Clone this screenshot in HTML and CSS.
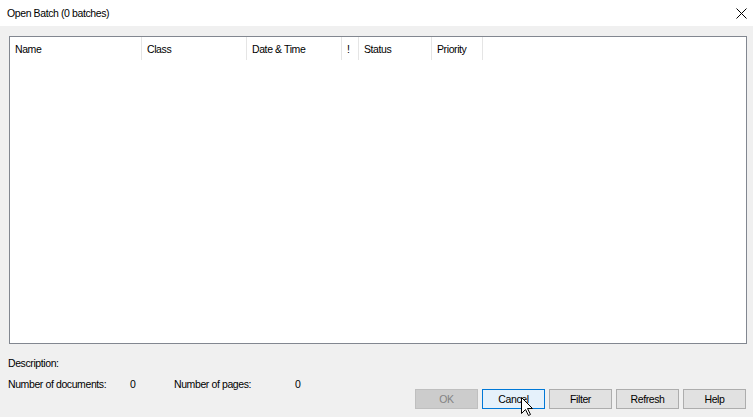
FILE: index.html
```html
<!DOCTYPE html>
<html lang="en">
<head>
    <meta charset="UTF-8">
    <title>Open Batch</title>
    <link rel="stylesheet" href="styles.css">
</head>
<body>
    <div class="dialog">
        <div class="titlebar">
            <span class="title">Open Batch (0 batches)</span>
            <svg class="close" width="11" height="11" viewBox="0 0 11 11">
                <path d="M0.5 0.5 L10.5 10.5 M10.5 0.5 L0.5 10.5" stroke="#000" stroke-width="1" fill="none"/>
            </svg>
        </div>

        <div class="content">
            <div class="list">
                <div class="list-header">
                    <div class="col col-name">Name</div>
                    <div class="col col-class">Class</div>
                    <div class="col col-date">Date &amp; Time</div>
                    <div class="col col-flag">!</div>
                    <div class="col col-status">Status</div>
                    <div class="col col-priority">Priority</div>
                </div>
            </div>

            <div class="footer">
                <div class="info">
                    <div class="info-row">Description:</div>
                    <div class="info-row">
                        <span class="label label-docs">Number of documents:</span>
                        <span class="value">0</span>
                        <span class="label label-pages">Number of pages:</span>
                        <span class="value">0</span>
                    </div>
                </div>
                <div class="buttons">
                    <button class="btn" disabled>OK</button>
                    <button class="btn btn-focus">Cancel</button>
                    <button class="btn">Filter</button>
                    <button class="btn">Refresh</button>
                    <button class="btn">Help</button>
                    <svg class="cursor" width="13" height="20" viewBox="0 0 13 20">
                        <path d="M0.5 0.5 L0.5 16.5 L4.5 12.5 L7.5 18.5 L9.5 17.5 L6.5 11.5 L11.5 11.5 Z" fill="#fff" stroke="#000" stroke-width="1" stroke-linejoin="miter"/>
                    </svg>
                </div>
            </div>
        </div>
    </div>
</body>
</html>
```

FILE: styles.css
```css
* {
    box-sizing: border-box;
    margin: 0;
    padding: 0;
}

body {
    background-color: #f0f0f0;
    font-family: 'Liberation Sans', Arial, sans-serif;
    font-size: 10.5px;
    letter-spacing: -0.4px;
    color: #000;
}

.dialog {
    width: 753px;
    height: 417px;
    display: flex;
    flex-direction: column;
}

.titlebar {
    height: 26px;
    background-color: #fff;
    display: flex;
    align-items: center;
    justify-content: space-between;
    padding: 0 6px 0 7px;
}

.title {
    font-size: 10.5px;
}

.close {
    margin-top: 1px;
}

.content {
    flex: 1;
    padding: 10px 6px 0 9px;
    display: flex;
    flex-direction: column;
}

.list {
    height: 308px;
    background-color: #fff;
    border: 1px solid #828790;
}

.list-header {
    display: flex;
    height: 23px;
}

.col {
    border-right: 1px solid #e5e5e5;
    padding: 1px 0 0 5px;
    line-height: 22px;
    white-space: nowrap;
}

.col-name { width: 132px; }
.col-class { width: 105px; }
.col-date { width: 95px; }
.col-flag { width: 17px; }
.col-status { width: 73px; }
.col-priority { width: 51px; }

.footer {
    flex: 1;
    display: flex;
    justify-content: space-between;
}

.info {
    padding-top: 11px;
    margin-left: -1px;
}

.info-row {
    height: 16px;
    line-height: 16px;
    margin-bottom: 5px;
    display: flex;
}

.label-docs { width: 122px; }
.label-pages { width: 121px; }
.value { width: 44px; }

.buttons {
    position: relative;
    align-self: flex-end;
    display: flex;
    gap: 4px;
    margin: 0 1px 8px 0;
}

.btn {
    width: 63px;
    height: 20px;
    font-family: inherit;
    font-size: 10.5px;
    letter-spacing: -0.4px;
    color: #000;
    background-color: #e1e1e1;
    border: 1px solid #adadad;
}

.btn:disabled {
    color: #838383;
    background-color: #cccccc;
    border-color: #bfbfbf;
}

.btn-focus {
    background-color: #e5f1fb;
    border-color: #0078d7;
}

.cursor {
    position: absolute;
    left: 106px;
    top: 8px;
}
```
